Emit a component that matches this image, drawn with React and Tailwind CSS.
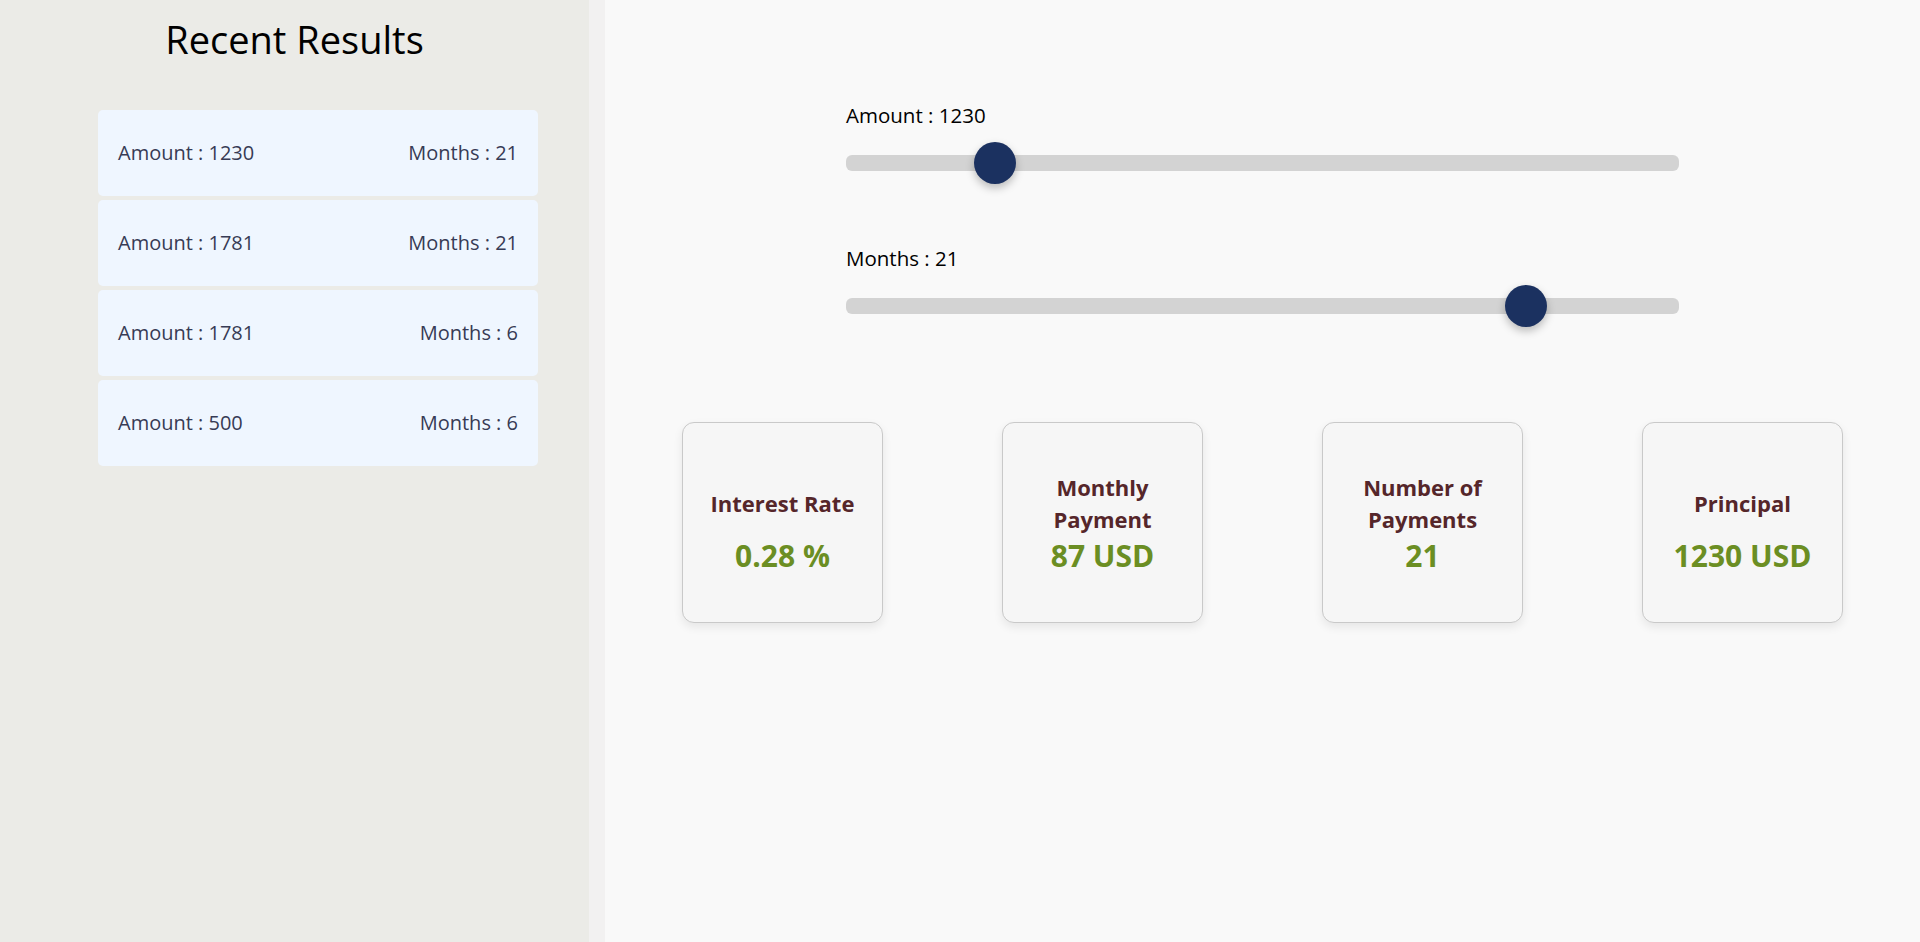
import { useState } from 'react';

const history = [
  { amount: 1230, months: 21 },
  { amount: 1781, months: 21 },
  { amount: 1781, months: 6 },
  { amount: 500, months: 6 },
];

const Slider = ({ label, value, min, max }) => {
  const pct = (value - min) / (max - min);
  return (
    <div className="flex flex-col">
      <span className="text-[20.5px] leading-[26px] text-black">{label} : {value}</span>
      <div className="relative mt-[27px] h-4 rounded-[6px] bg-[#d3d3d3]">
        <div
          className="absolute top-1/2 h-[42px] w-[42px] -translate-x-1/2 -translate-y-1/2 rounded-full bg-[#1b3160] shadow-[0_4px_8px_rgba(0,0,0,0.25)]"
          style={{ left: `calc(${pct} * (100% - 42px) + 21px)` }}
        />
      </div>
    </div>
  );
};

const StatCard = ({ title, value }) => (
  <div className="flex h-[201px] w-[201px] flex-col items-center justify-center rounded-xl border border-[#c9c9c9] bg-[#f6f6f6] shadow-[0_4px_10px_rgba(0,0,0,0.08)]">
    <div className="flex h-[64px] items-center justify-center px-3 text-center text-[22px] font-bold leading-[32px] text-[#55262a]">
      {title}
    </div>
    <div className="mt-[3px] text-[30px] font-bold leading-[36px] text-[#6b8e23]">{value}</div>
  </div>
);

export default function App() {
  const [amount] = useState(1230);
  const [months] = useState(21);

  return (
    <div className="flex h-screen font-['Open_Sans',sans-serif]">
      <aside className="w-[589px] shrink-0 bg-[#ebebe7]">
        <h1 className="pt-[12px] text-center text-[38px] font-medium leading-[54px] text-black">Recent Results</h1>
        <div className="ml-[98px] mt-[44px] flex w-[440px] flex-col gap-[4px]">
          {history.map((h, i) => (
            <div
              key={i}
              className="flex h-[86px] items-center justify-between rounded-[5px] bg-[#eff6ff] px-[20px] text-[20px] font-medium text-[#373b55]"
            >
              <span>Amount : {h.amount}</span>
              <span>Months : {h.months}</span>
            </div>
          ))}
        </div>
      </aside>
      <div className="w-[16px] shrink-0 bg-[#f2f1f1]" />
      <main className="flex-1 bg-[#f9f9f9]">
        <div className="mx-auto mt-[102px] flex w-[833px] flex-col gap-[74px]">
          <Slider label="Amount" value={amount} min={500} max={5000} />
          <Slider label="Months" value={months} min={6} max={24} />
        </div>
        <div className="mt-[108px] flex justify-center gap-[119px]">
          <StatCard title="Interest Rate" value="0.28 %" />
          <StatCard title="Monthly Payment" value="87 USD" />
          <StatCard title="Number of Payments" value={months} />
          <StatCard title="Principal" value={`${amount} USD`} />
        </div>
      </main>
    </div>
  );
}
